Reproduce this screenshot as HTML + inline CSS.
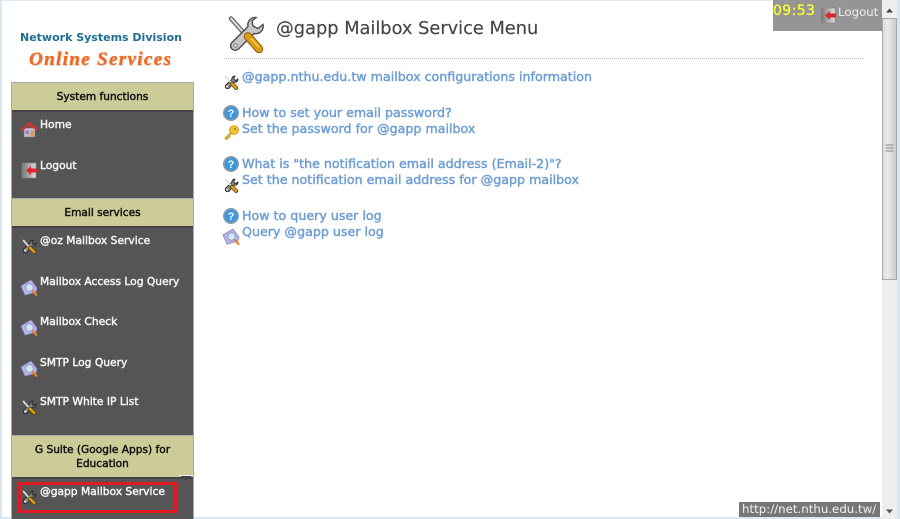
<!DOCTYPE html>
<html><head><meta charset="utf-8"><title>@gapp Mailbox Service Menu</title>
<style>
html,body{margin:0;padding:0;width:900px;height:519px;overflow:hidden;background:#fff}
body{position:relative;font-family:"DejaVu Sans","Liberation Sans",sans-serif}
.a{position:absolute;white-space:nowrap}
.side{filter:blur(.3px)}
.hd{position:absolute;left:12px;width:181px;background:#cccc99;border-top:1px solid #aaa;border-bottom:2px solid #444;color:#111;font-size:10.6px;-webkit-text-stroke:.45px #111;text-align:center;box-sizing:border-box}
.m{position:absolute;left:40px;color:#f4f4f4;font-size:10.7px;-webkit-text-stroke:.45px #f4f4f4;white-space:nowrap;line-height:14px}
.l{position:absolute;left:242px;color:#6f9ed4;font-size:12.65px;-webkit-text-stroke:.45px #6f9ed4;white-space:nowrap;line-height:16px;filter:blur(.25px)}
svg.i{position:absolute;overflow:visible}
</style></head><body>
<svg width="0" height="0" style="position:absolute">
<defs>
<linearGradient id="dg" x1="0" y1="0" x2="1" y2="0"><stop offset="0" stop-color="#777"/><stop offset="1" stop-color="#ddd"/></linearGradient>
<g id="tools">
<path d="M3 3 L19 21" stroke="#555" stroke-width="4.400" stroke-linecap="round"/>
<path d="M3 3 L19 21" stroke="#ddd" stroke-width="2.200" stroke-linecap="round"/>
<path d="M28 2 a7.500 7.500 0 0 0-8 9 L4 27 a4.500 4.500 0 1 0 6.500 6.500 L26 18 a7.500 7.500 0 0 0 9-9 l-5 4 -5-2.500 -1-5z" fill="#c6c6c6" stroke="#4a4a4a" stroke-width="1.400"/>
<circle cx="7.500" cy="30" r="1.600" fill="#fff" stroke="#555" stroke-width=".7"/>
<path d="M20 21 L31 33.500" stroke="#7a5208" stroke-width="8.500" stroke-linecap="round"/>
<path d="M20 21 L31 33.500" stroke="#dc9c14" stroke-width="6.800" stroke-linecap="round"/>
<path d="M23 23 L31 32" stroke="#f5cf58" stroke-width="1.400"/>
</g>
<g id="toolsS">
<path d="M28 3 a7 7 0 0 0-8 8 L5 25 a5.500 5.500 0 1 0 8 8 L26 18 a7 7 0 0 0 9-8 l-5 4 -4-2 -1-5z" fill="#8a8a8a" stroke="#2a2a2a" stroke-width="2.400"/>
<path d="M4 4 L19 21" stroke="#ddd" stroke-width="4.500" stroke-linecap="round"/>
<circle cx="8" cy="29" r="2.500" fill="#eee"/>
<path d="M20 22 L31 33" stroke="#4a3806" stroke-width="10" stroke-linecap="round"/>
<path d="M20 22 L31 33" stroke="#dca014" stroke-width="6.500" stroke-linecap="round"/>
</g>
<g id="mag">
<path d="M0 7 L10 1 L16 9 L15 13 L4 16 Z" fill="#b9b4ec" stroke="#8a86bb" stroke-width=".8"/>
<circle cx="8.500" cy="8.500" r="3.800" fill="#cfe6f2" stroke="#8f9cc4" stroke-width=".9"/>
<path d="M11.500 12 L15.500 16" stroke="#e8802a" stroke-width="2.200" stroke-linecap="round"/>
</g>
<g id="q">
<circle cx="8" cy="8" r="7.200" fill="#3b97df" stroke="#8c9aa6" stroke-width="1.600"/>
<text x="8" y="12" text-anchor="middle" font-family="Liberation Sans" font-weight="bold" font-size="11" fill="#fff">?</text>
</g>
<g id="home">
<rect x="3" y="7" width="11" height="9" fill="#c9b8dc" stroke="#776" stroke-width=".5"/>
<path d="M0 8.500 L8 1 L16 7 L16 9.500 L8 4.500 L1 10.500Z" fill="#d8342c"/>
<rect x="9.500" y="9.500" width="3.500" height="6.500" fill="#e0a030"/>
<rect x="4.500" y="9.500" width="3.500" height="3.500" fill="#8888cc"/>
</g>
<g id="out">
<rect x="0" y="1" width="14" height="15" fill="url(#dg)" stroke="#888" stroke-width=".6"/>
<path d="M4 8.500 L9 4 V6.500 H15 V10.500 H9 V13Z" fill="#e0252a"/>
</g>
</defs>
</svg>

<!-- page frame -->
<div class="a" style="left:0;top:0;width:900px;height:1px;background:#e4e9f1"></div>
<div class="a" style="left:0;top:0;width:2px;height:519px;background:#d9e6f6"></div>
<div class="a" style="left:0;top:517px;width:900px;height:2px;background:#d9e6f6"></div>
<div class="a" style="left:897px;top:0;width:3px;height:519px;background:#d9e6f6"></div>

<!-- logo -->
<div class="a" style="left:20px;top:31px;font:bold 11px 'DejaVu Sans',sans-serif;color:#1f6e92;filter:blur(.3px)">Network Systems Division</div>
<div class="a" style="left:29px;top:49px;font:italic bold 19px 'Liberation Serif',serif;letter-spacing:1.35px;color:#ef6a22;-webkit-text-stroke:.3px #ef6a22;filter:blur(.3px);text-shadow:1px 1px 1px #ccc">Online Services</div>

<!-- sidebar -->
<div class="a" style="left:11px;top:82px;width:183px;height:437px;background:#555;box-sizing:border-box;border:1px solid #aaa;border-bottom:none"></div>
<div class="side">
<div class="hd" style="top:82px;height:30px;line-height:28px">System functions</div>
<div class="m" style="top:118px">Home</div>
<div class="m" style="top:159px">Logout</div>
<div class="hd" style="top:198px;height:30px;line-height:28px">Email services</div>
<div class="m" style="top:234px">@oz Mailbox Service</div>
<div class="m" style="top:275px">Mailbox Access Log Query</div>
<div class="m" style="top:315px">Mailbox Check</div>
<div class="m" style="top:356px">SMTP Log Query</div>
<div class="m" style="top:395px">SMTP White IP List</div>
<div class="hd" style="top:435px;height:44px;line-height:13.500px;padding:8px 10px 0">G Suite (Google Apps) for Education</div>
<div class="m" style="top:485px">@gapp Mailbox Service</div>
</div>
<svg class="a" style="left:179px;top:475px" width="14" height="6"><path d="M1 1H13L7 5Z" fill="#444"/><path d="M0 .5H14" stroke="#eee"/></svg>
<div class="a" style="left:18px;top:482px;width:159px;height:31px;box-sizing:border-box;border:3px solid #e01b24"></div>

<svg class="i" style="left:21px;top:121px" width="16" height="16"><use href="#home"/></svg>
<svg class="i" style="left:22px;top:162px" width="16" height="16"><use href="#out"/></svg>
<svg class="i" style="left:22px;top:239px" width="15" height="15" viewBox="0 0 38 38"><use href="#toolsS"/></svg>
<svg class="i" style="left:21px;top:279px" width="16" height="16"><use href="#mag"/></svg>
<svg class="i" style="left:21px;top:319px" width="16" height="16"><use href="#mag"/></svg>
<svg class="i" style="left:21px;top:360px" width="16" height="16"><use href="#mag"/></svg>
<svg class="i" style="left:22px;top:400px" width="15" height="15" viewBox="0 0 38 38"><use href="#toolsS"/></svg>
<svg class="i" style="left:22px;top:490px" width="15" height="15" viewBox="0 0 38 38"><use href="#toolsS"/></svg>

<!-- main -->
<svg class="i" style="left:228px;top:15px" width="38" height="39" viewBox="0 0 38 38"><use href="#tools"/></svg>
<div class="a" style="left:276px;top:16px;font-size:17.800px;line-height:26px;color:#444;-webkit-text-stroke:.15px #444;filter:blur(.25px)">@gapp Mailbox Service Menu</div>
<div class="a" style="left:224px;top:58px;width:639px;border-top:1px dotted #bbb"></div>

<svg class="i" style="left:224px;top:75px" width="15" height="15" viewBox="0 0 38 38"><use href="#toolsS"/></svg>
<div class="l" style="top:69px">@gapp.nthu.edu.tw mailbox configurations information</div>
<svg class="i" style="left:223px;top:105px" width="16" height="16"><use href="#q"/></svg>
<div class="l" style="top:105px">How to set your email password?</div>
<svg class="i" style="left:223px;top:125px" width="16" height="16"><path d="M2 14 L8 8 M2.500 12 L5 14.500 M4.500 10 L7 12.500" stroke="#d8a010" stroke-width="2" fill="none"/><circle cx="11" cy="5" r="4.400" fill="#f2c230" stroke="#c89018" stroke-width=".8"/><circle cx="12" cy="4" r="1" fill="#a87810"/></svg>
<div class="l" style="top:121px">Set the password for @gapp mailbox</div>
<svg class="i" style="left:223px;top:156px" width="16" height="16"><use href="#q"/></svg>
<div class="l" style="top:156px">What is "the notification email address (Email-2)"?</div>
<svg class="i" style="left:224px;top:178px" width="15" height="15" viewBox="0 0 38 38"><use href="#toolsS"/></svg>
<div class="l" style="top:172px">Set the notification email address for @gapp mailbox</div>
<svg class="i" style="left:223px;top:208px" width="16" height="16"><use href="#q"/></svg>
<div class="l" style="top:208px">How to query user log</div>
<svg class="i" style="left:223px;top:228px" width="16" height="16"><use href="#mag"/></svg>
<div class="l" style="top:224px">Query @gapp user log</div>

<!-- scrollbar -->
<div class="a" style="left:882px;top:0;width:15px;height:519px;background:#eee"></div>
<svg class="a" style="left:885px;top:8px" width="9" height="5"><path d="M1 4.500H8L4.500 .5Z" fill="#444"/></svg>
<svg class="a" style="left:885px;top:509px" width="9" height="5"><path d="M1 .5H8L4.500 4.500Z" fill="#555"/></svg>
<div class="a" style="left:882px;top:18px;width:15px;height:262px;box-sizing:border-box;border:1px solid #a8a8a8;background:linear-gradient(90deg,#ddd,#eaeaea 35%,#ccc)"></div>
<svg class="a" style="left:885px;top:144px" width="9" height="10"><path d="M.5 1H8.500M.5 4H8.500M.5 7H8.500" stroke="#888" stroke-width="1"/></svg>

<!-- top-right clock -->
<div class="a" style="left:773px;top:0;width:109px;height:31px;background:#959595"></div>
<div class="a" style="left:773px;top:3px;font-size:14px;line-height:17px;letter-spacing:.4px;color:#ffff33;-webkit-text-stroke:.25px #ffff33">09:53</div>
<svg class="i" style="left:821px;top:7px" width="16" height="16"><use href="#out"/></svg>
<div class="a" style="left:838px;top:5px;font-size:11.800px;line-height:14px;color:#eee">Logout</div>

<!-- status -->
<div class="a" style="left:739px;top:502px;width:141px;height:15px;background:#777;color:#f2f2f2;font-size:11.800px;line-height:15px;padding-left:3px;box-sizing:border-box">http://net.nthu.edu.tw/</div>
</body></html>
